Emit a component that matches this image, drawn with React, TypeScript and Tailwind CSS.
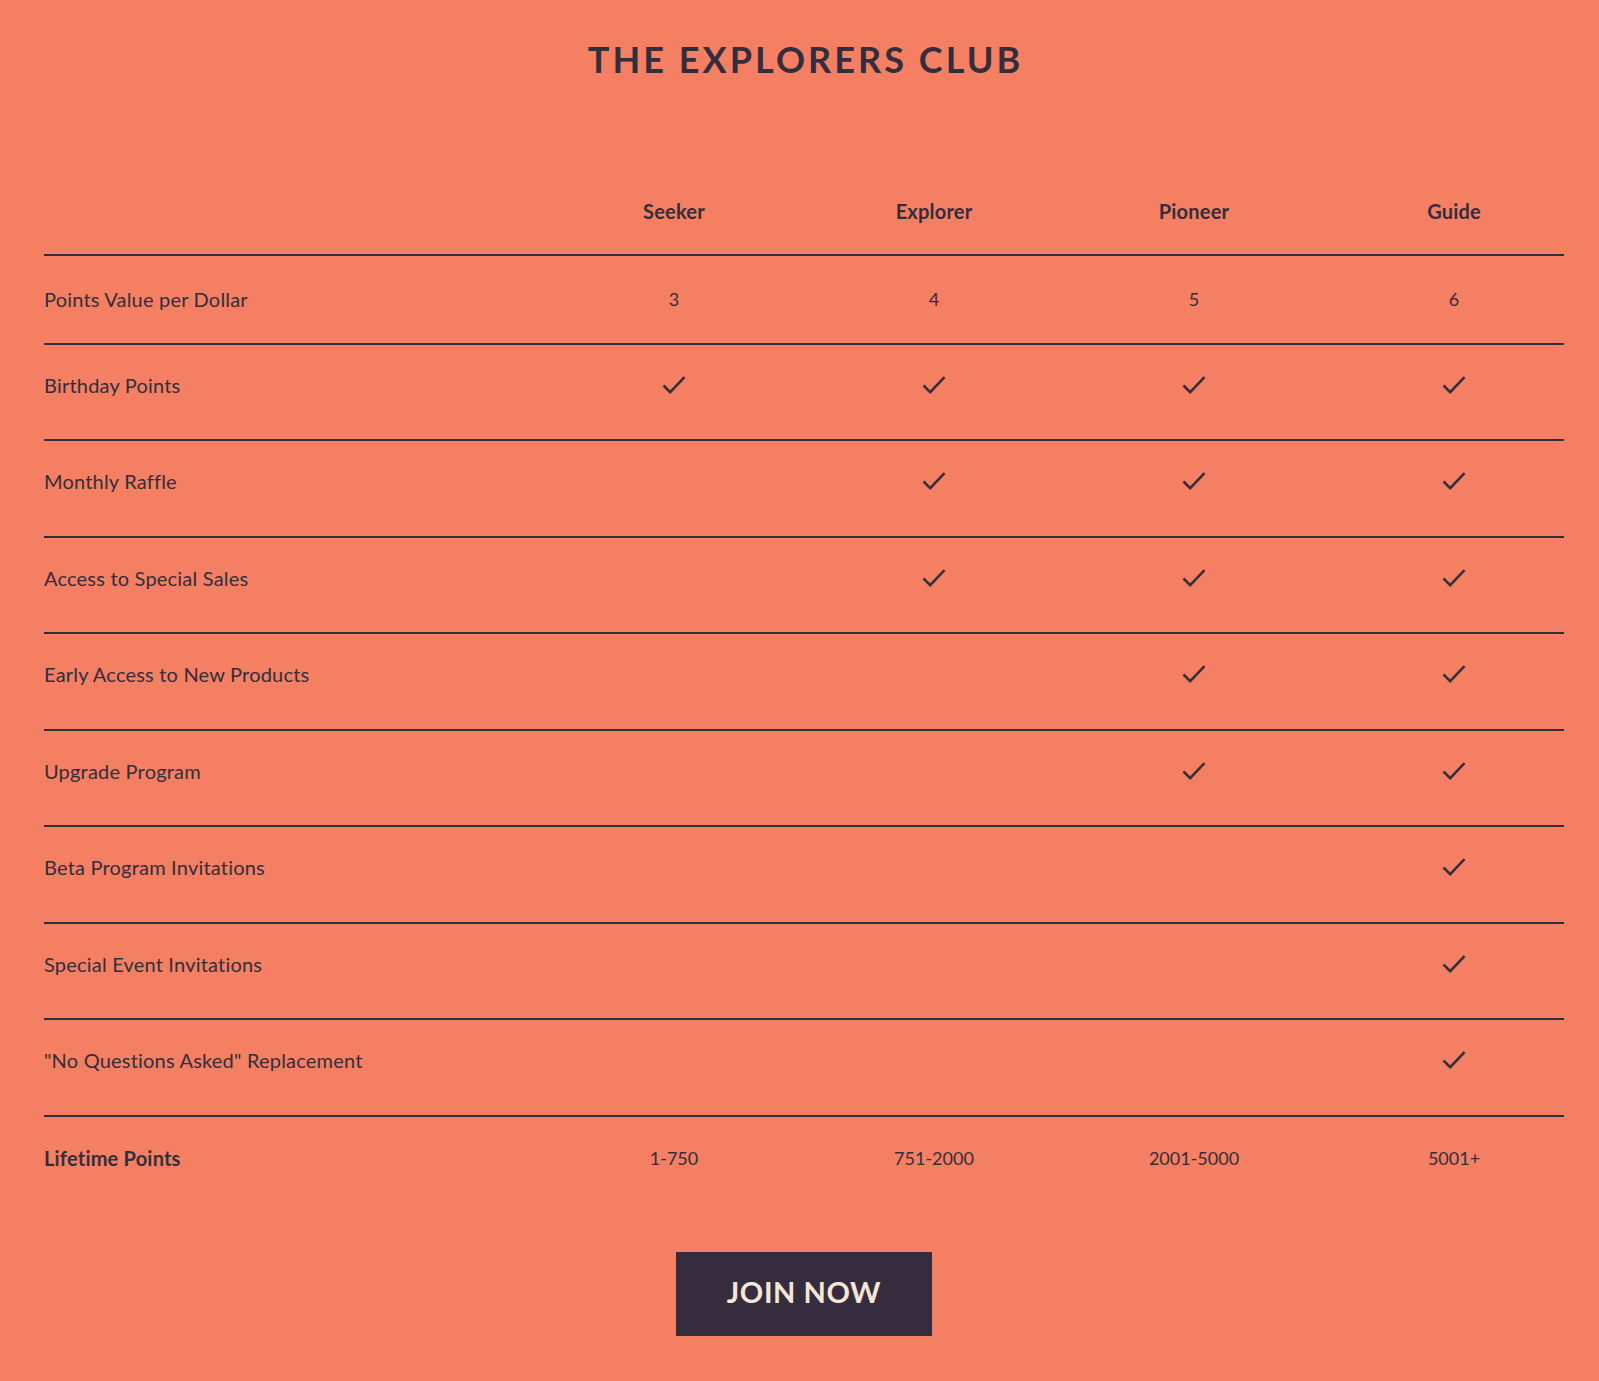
import React from "react";

type Row = { label: string; cells: (string | boolean)[] };

const rows: Row[] = [
  { label: "Birthday Points", cells: [true, true, true, true] },
  { label: "Monthly Raffle", cells: [false, true, true, true] },
  { label: "Access to Special Sales", cells: [false, true, true, true] },
  { label: "Early Access to New Products", cells: [false, false, true, true] },
  { label: "Upgrade Program", cells: [false, false, true, true] },
  { label: "Beta Program Invitations", cells: [false, false, false, true] },
  { label: "Special Event Invitations", cells: [false, false, false, true] },
  { label: '"No Questions Asked" Replacement', cells: [false, false, false, true] },
];

const heights = ["h-[94px]", "h-[95px]", "h-[94px]", "h-[95px]", "h-[94px]", "h-[95px]", "h-[94px]", "h-[95px]"];

function Check() {
  return (
    <svg width="24" height="20" viewBox="0 0 24 20" fill="none" aria-hidden="true">
      <path d="M1.5 10.5 L8.2 17.2 L22.5 2.2" stroke="#332e3d" strokeWidth="2.5" />
    </svg>
  );
}

function Line() {
  return <div className="h-[2px] w-[1520px] bg-[#332e3d]" />;
}

const grid = "grid grid-cols-[500px_260px_260px_260px_260px]";

export default function App() {
  return (
    <div
      className="min-h-screen w-full bg-[#f47f62] text-[#332e3d]"
      style={{ fontFamily: "Lato, 'Noto Sans', sans-serif" }}
    >
      <div className="ml-[44px] w-[1520px] pt-[41px] pb-[45px]">
        <h1 className="h-[36px] text-center text-[36px] font-bold leading-none tracking-[0.085em] pl-[0.085em]">
          THE EXPLORERS CLUB
        </h1>

        <div className={`${grid} mt-[91px] h-[86px] items-center text-[20px] font-bold leading-[28px] tracking-[0.01em]`}>
          <div />
          <div className="text-center">Seeker</div>
          <div className="text-center">Explorer</div>
          <div className="text-center">Pioneer</div>
          <div className="text-center">Guide</div>
        </div>
        <Line />

        <div className={`${grid} h-[87px] items-center text-[18px] leading-[27px]`}>
          <div className="text-[20px] tracking-[0.01em]">Points Value per Dollar</div>
          <div className="text-center">3</div>
          <div className="text-center">4</div>
          <div className="text-center">5</div>
          <div className="text-center">6</div>
        </div>
        <Line />

        {rows.map((r, i) => (
          <React.Fragment key={r.label}>
            <div className={`${grid} ${heights[i]} items-start text-[20px] leading-[28px] tracking-[0.01em]`}>
              <div className="flex h-[80px] items-center">{r.label}</div>
              {r.cells.map((c, j) => (
                <div key={j} className="flex h-[80px] items-center justify-center">
                  {c ? <Check /> : null}
                </div>
              ))}
            </div>
            <Line />
          </React.Fragment>
        ))}

        <div className={`${grid} h-[82px] items-center text-[18px] leading-[27px]`}>
          <div className="text-[20px] font-bold tracking-[0.01em]">Lifetime Points</div>
          <div className="text-center">1-750</div>
          <div className="text-center">751-2000</div>
          <div className="text-center">2001-5000</div>
          <div className="text-center">5001+</div>
        </div>

        <div className="mt-[53px] flex justify-center">
          <button className="flex h-[84px] w-[256px] items-center justify-center bg-[#352d3e] pb-[6px] text-[29px] font-bold leading-none tracking-[0.02em] text-[#f6e6d6]">
            JOIN NOW
          </button>
        </div>
      </div>
    </div>
  );
}
